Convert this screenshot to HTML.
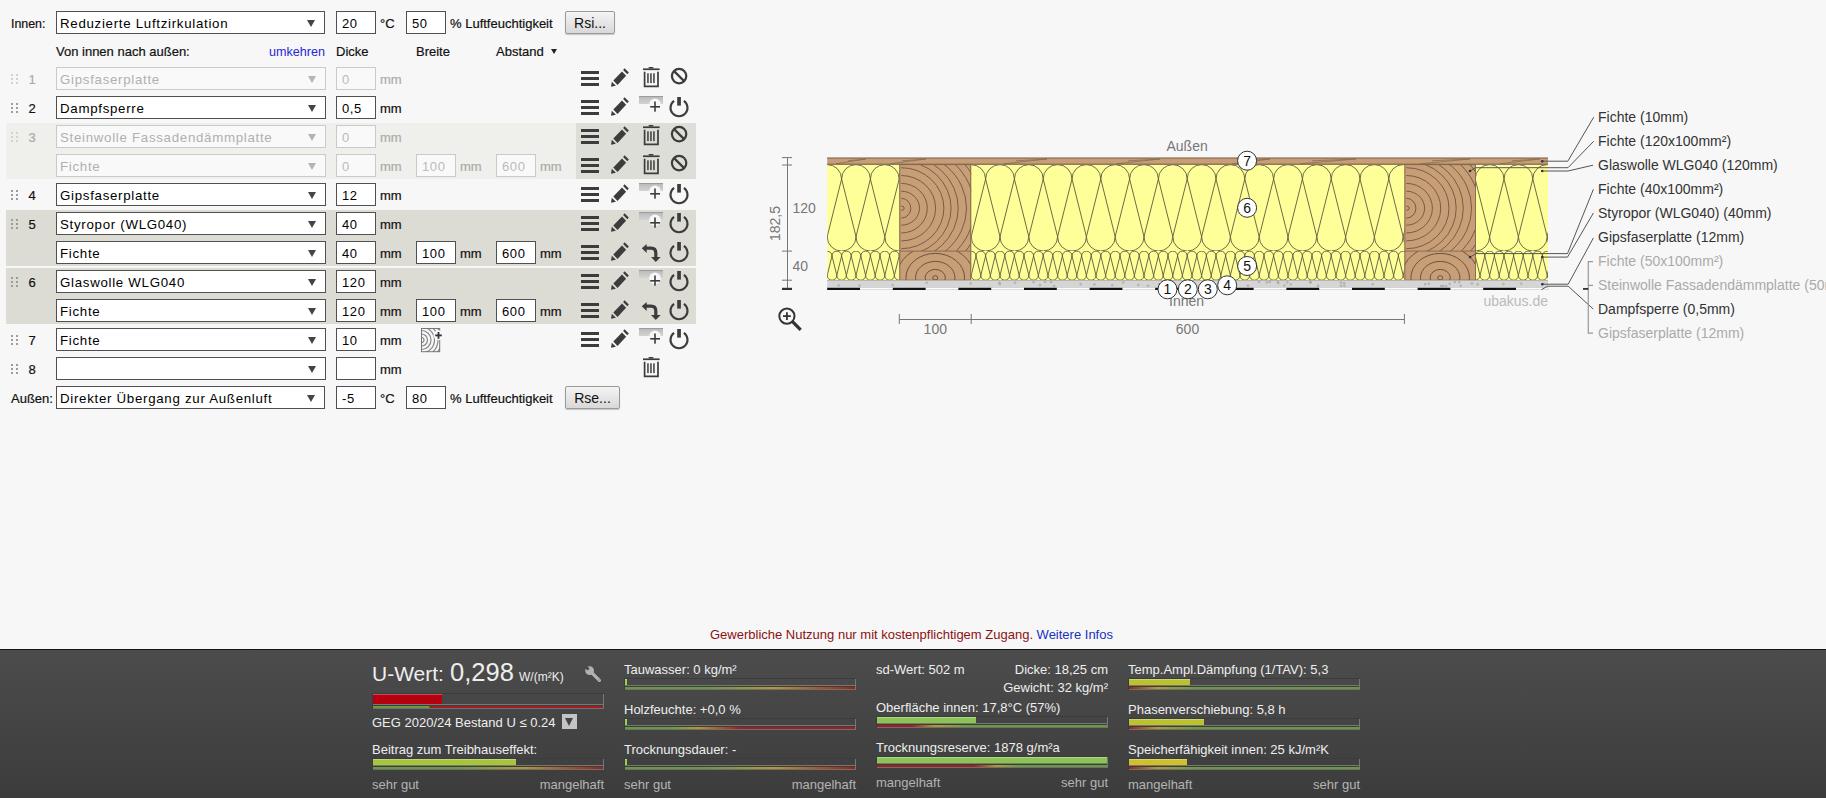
<!DOCTYPE html><html><head><meta charset="utf-8"><style>
html,body{margin:0;padding:0;}
body{width:1826px;height:798px;overflow:hidden;position:relative;background:#f7f7f7;font-family:"Liberation Sans",sans-serif;color:#111;}
.a{position:absolute;}
.t{position:absolute;font-size:13px;line-height:15px;white-space:nowrap;-webkit-text-stroke:0.2px currentColor;}
.sel{position:absolute;left:56px;width:268px;height:21px;border:1px solid #505050;background:#fff;color:#000;font-size:13.3px;letter-spacing:0.7px;line-height:23px;text-indent:3px;white-space:nowrap;overflow:hidden;}
.sel:after{content:"";position:absolute;right:9px;top:8px;border-left:4px solid transparent;border-right:4px solid transparent;border-top:7px solid #444;}
.sel.d{border-color:#cacaca;background:#f9f9f9;color:#b0b0b0;}
.sel.d:after{border-top-color:#b4b4b4;}
.inp{position:absolute;width:38px;height:21px;border:1px solid #505050;background:#fff;color:#000;font-size:13px;letter-spacing:0.6px;line-height:23px;text-indent:5px;white-space:nowrap;}
.inp.d{border-color:#cacaca;background:#f9f9f9;color:#bbb;}
.mm{position:absolute;font-size:13px;line-height:15px;color:#111;-webkit-text-stroke:0.2px currentColor;}
.mm.d{color:#aaa;}
.num{position:absolute;left:26px;width:12px;text-align:center;font-size:13px;line-height:15px;color:#111;-webkit-text-stroke:0.2px currentColor;}
.num.d{color:#aaa;}
.btn{position:absolute;height:21px;border:1px solid #9a9a9a;border-radius:2px;background:linear-gradient(#f4f4f4,#d8d8d8);font-size:14px;line-height:22px;text-align:center;box-shadow:0 1px 1px rgba(0,0,0,.2);color:#111;}
.ic{position:absolute;overflow:visible;}
</style></head><body>
<div class="a" style="left:6px;top:123px;width:570px;height:56px;background:#efefec"></div>
<div class="a" style="left:576px;top:123px;width:120px;height:56px;background:#deded8"></div>
<div class="a" style="left:6px;top:210px;width:690px;height:56px;background:#dcdcd5"></div>
<div class="a" style="left:6px;top:268px;width:690px;height:56px;background:#dcdcd5"></div>
<div class="t" style="left:11px;top:17px;font-size:12.4px;color:#111">Innen:</div>
<div class="sel" style="top:11px;width:267px">Reduzierte Luftzirkulation</div>
<div class="inp" style="left:336px;top:11px">20</div>
<div class="t" style="left:380px;top:16px">°C</div>
<div class="inp" style="left:406px;top:11px">50</div>
<div class="t" style="left:450px;top:16px">% Luftfeuchtigkeit</div>
<div class="btn" style="left:565px;top:11px;width:48px">Rsi...</div>
<div class="t" style="left:56px;top:44px">Von innen nach außen:</div>
<div class="t" style="left:269px;top:45px;color:#2626d6;font-size:12.6px;-webkit-text-stroke:0">umkehren</div>
<div class="t" style="left:336px;top:44px">Dicke</div>
<div class="t" style="left:416px;top:44px">Breite</div>
<div class="t" style="left:496px;top:44px">Abstand</div>
<div class="a" style="left:551px;top:49px;border-left:3px solid transparent;border-right:3px solid transparent;border-top:5px solid #222"></div>
<div class="a" style="left:11px;top:74px;width:8px;height:12px"><i style="position:absolute;left:0px;top:0px;width:2px;height:2px;background:#d2d2d2"></i><i style="position:absolute;left:5px;top:0px;width:2px;height:2px;background:#d2d2d2"></i><i style="position:absolute;left:0px;top:4px;width:2px;height:2px;background:#d2d2d2"></i><i style="position:absolute;left:5px;top:4px;width:2px;height:2px;background:#d2d2d2"></i><i style="position:absolute;left:0px;top:8px;width:2px;height:2px;background:#d2d2d2"></i><i style="position:absolute;left:5px;top:8px;width:2px;height:2px;background:#d2d2d2"></i></div>
<div class="num d" style="top:72px">1</div>
<div class="sel d" style="top:67px">Gipsfaserplatte</div>
<div class="inp d" style="left:336px;top:67px">0</div>
<div class="mm d" style="left:380px;top:72px">mm</div>
<svg class="ic" style="left:581px;top:71px" width="18" height="15"><rect x="0" y="0" width="18" height="3" fill="#3c3c3c"/><rect x="0" y="6" width="18" height="3" fill="#3c3c3c"/><rect x="0" y="12" width="18" height="3" fill="#3c3c3c"/></svg>
<svg class="ic" style="left:611px;top:68px" width="18" height="18.8" viewBox="0 0 18 18" preserveAspectRatio="none"><polygon points="0,18 0.8,13.2 4.9,17.1" fill="#3c3c3c"/><polygon points="2.3,12 11,3.4 15.1,7.5 6.5,16.2" fill="#3c3c3c"/><polygon points="12.1,1.9 13.6,0.3 17.8,4.3 16.3,5.9" fill="#3c3c3c"/></svg>
<svg class="ic" style="left:643px;top:67px" width="16" height="20"><rect x="0" y="1.4" width="16.6" height="1.7" fill="#3c3c3c"/><rect x="5.5" y="0" width="5" height="1.6" rx="0.8" fill="#3c3c3c"/><path d="M1.6,4.8 V19.4 H15 V4.8" fill="none" stroke="#3c3c3c" stroke-width="1.7"/><rect x="4.2" y="6.3" width="1.5" height="9.8" fill="#3c3c3c"/><rect x="7.2" y="6.3" width="1.5" height="9.8" fill="#3c3c3c"/><rect x="10.2" y="6.3" width="1.5" height="9.8" fill="#3c3c3c"/></svg>
<svg class="ic" style="left:670px;top:67px" width="18" height="20"><circle cx="9.1" cy="9.1" r="7.2" fill="none" stroke="#3c3c3c" stroke-width="2.2"/><line x1="4.1" y1="4.1" x2="14.1" y2="14.1" stroke="#3c3c3c" stroke-width="2.2"/></svg>
<div class="a" style="left:11px;top:103px;width:8px;height:12px"><i style="position:absolute;left:0px;top:0px;width:2px;height:2px;background:#9c9c9c"></i><i style="position:absolute;left:5px;top:0px;width:2px;height:2px;background:#9c9c9c"></i><i style="position:absolute;left:0px;top:4px;width:2px;height:2px;background:#9c9c9c"></i><i style="position:absolute;left:5px;top:4px;width:2px;height:2px;background:#9c9c9c"></i><i style="position:absolute;left:0px;top:8px;width:2px;height:2px;background:#9c9c9c"></i><i style="position:absolute;left:5px;top:8px;width:2px;height:2px;background:#9c9c9c"></i></div>
<div class="num" style="top:101px">2</div>
<div class="sel" style="top:96px">Dampfsperre</div>
<div class="inp" style="left:336px;top:96px">0,5</div>
<div class="mm" style="left:380px;top:101px">mm</div>
<svg class="ic" style="left:581px;top:100px" width="18" height="15"><rect x="0" y="0" width="18" height="3" fill="#3c3c3c"/><rect x="0" y="6" width="18" height="3" fill="#3c3c3c"/><rect x="0" y="12" width="18" height="3" fill="#3c3c3c"/></svg>
<svg class="ic" style="left:611px;top:97px" width="18" height="18.8" viewBox="0 0 18 18" preserveAspectRatio="none"><polygon points="0,18 0.8,13.2 4.9,17.1" fill="#3c3c3c"/><polygon points="2.3,12 11,3.4 15.1,7.5 6.5,16.2" fill="#3c3c3c"/><polygon points="12.1,1.9 13.6,0.3 17.8,4.3 16.3,5.9" fill="#3c3c3c"/></svg>
<svg class="ic" style="left:639px;top:96px" width="24" height="22"><defs><linearGradient id="g96" x1="0" y1="0" x2="0" y2="1"><stop offset="0" stop-color="#b8b8b8"/><stop offset="1" stop-color="#d4d4d4"/></linearGradient></defs><rect x="0" y="0" width="24" height="8" fill="url(#g96)"/><rect x="0" y="0" width="24" height="1" fill="#9c9c9c"/><circle cx="16" cy="8.3" r="5.8" fill="#f7f7f7"/><rect x="11.2" y="10" width="9.8" height="1.6" fill="#3c3c3c"/><rect x="15.2" y="5.5" width="1.6" height="10.2" fill="#3c3c3c"/></svg>
<svg class="ic" style="left:669px;top:96px" width="20" height="22"><path d="M5.1,4.8 A8.5,8.5 0 1 0 14.9,4.8" fill="none" stroke="#3c3c3c" stroke-width="2.1"/><rect x="8.2" y="1" width="3.7" height="8.6" fill="#3c3c3c"/></svg>
<div class="a" style="left:11px;top:132px;width:8px;height:12px"><i style="position:absolute;left:0px;top:0px;width:2px;height:2px;background:#d2d2d2"></i><i style="position:absolute;left:5px;top:0px;width:2px;height:2px;background:#d2d2d2"></i><i style="position:absolute;left:0px;top:4px;width:2px;height:2px;background:#d2d2d2"></i><i style="position:absolute;left:5px;top:4px;width:2px;height:2px;background:#d2d2d2"></i><i style="position:absolute;left:0px;top:8px;width:2px;height:2px;background:#d2d2d2"></i><i style="position:absolute;left:5px;top:8px;width:2px;height:2px;background:#d2d2d2"></i></div>
<div class="num d" style="top:130px">3</div>
<div class="sel d" style="top:125px">Steinwolle Fassadendämmplatte</div>
<div class="inp d" style="left:336px;top:125px">0</div>
<div class="mm d" style="left:380px;top:130px">mm</div>
<svg class="ic" style="left:581px;top:129px" width="18" height="15"><rect x="0" y="0" width="18" height="3" fill="#3c3c3c"/><rect x="0" y="6" width="18" height="3" fill="#3c3c3c"/><rect x="0" y="12" width="18" height="3" fill="#3c3c3c"/></svg>
<svg class="ic" style="left:611px;top:126px" width="18" height="18.8" viewBox="0 0 18 18" preserveAspectRatio="none"><polygon points="0,18 0.8,13.2 4.9,17.1" fill="#3c3c3c"/><polygon points="2.3,12 11,3.4 15.1,7.5 6.5,16.2" fill="#3c3c3c"/><polygon points="12.1,1.9 13.6,0.3 17.8,4.3 16.3,5.9" fill="#3c3c3c"/></svg>
<svg class="ic" style="left:643px;top:125px" width="16" height="20"><rect x="0" y="1.4" width="16.6" height="1.7" fill="#3c3c3c"/><rect x="5.5" y="0" width="5" height="1.6" rx="0.8" fill="#3c3c3c"/><path d="M1.6,4.8 V19.4 H15 V4.8" fill="none" stroke="#3c3c3c" stroke-width="1.7"/><rect x="4.2" y="6.3" width="1.5" height="9.8" fill="#3c3c3c"/><rect x="7.2" y="6.3" width="1.5" height="9.8" fill="#3c3c3c"/><rect x="10.2" y="6.3" width="1.5" height="9.8" fill="#3c3c3c"/></svg>
<svg class="ic" style="left:670px;top:125px" width="18" height="20"><circle cx="9.1" cy="9.1" r="7.2" fill="none" stroke="#3c3c3c" stroke-width="2.2"/><line x1="4.1" y1="4.1" x2="14.1" y2="14.1" stroke="#3c3c3c" stroke-width="2.2"/></svg>
<div class="sel d" style="top:154px">Fichte</div>
<div class="inp d" style="left:336px;top:154px">0</div>
<div class="mm d" style="left:380px;top:159px">mm</div>
<div class="inp d" style="left:416px;top:154px">100</div>
<div class="mm d" style="left:460px;top:159px">mm</div>
<div class="inp d" style="left:496px;top:154px">600</div>
<div class="mm d" style="left:540px;top:159px">mm</div>
<svg class="ic" style="left:581px;top:158px" width="18" height="15"><rect x="0" y="0" width="18" height="3" fill="#3c3c3c"/><rect x="0" y="6" width="18" height="3" fill="#3c3c3c"/><rect x="0" y="12" width="18" height="3" fill="#3c3c3c"/></svg>
<svg class="ic" style="left:611px;top:155px" width="18" height="18.8" viewBox="0 0 18 18" preserveAspectRatio="none"><polygon points="0,18 0.8,13.2 4.9,17.1" fill="#3c3c3c"/><polygon points="2.3,12 11,3.4 15.1,7.5 6.5,16.2" fill="#3c3c3c"/><polygon points="12.1,1.9 13.6,0.3 17.8,4.3 16.3,5.9" fill="#3c3c3c"/></svg>
<svg class="ic" style="left:643px;top:154px" width="16" height="20"><rect x="0" y="1.4" width="16.6" height="1.7" fill="#3c3c3c"/><rect x="5.5" y="0" width="5" height="1.6" rx="0.8" fill="#3c3c3c"/><path d="M1.6,4.8 V19.4 H15 V4.8" fill="none" stroke="#3c3c3c" stroke-width="1.7"/><rect x="4.2" y="6.3" width="1.5" height="9.8" fill="#3c3c3c"/><rect x="7.2" y="6.3" width="1.5" height="9.8" fill="#3c3c3c"/><rect x="10.2" y="6.3" width="1.5" height="9.8" fill="#3c3c3c"/></svg>
<svg class="ic" style="left:670px;top:154px" width="18" height="20"><circle cx="9.1" cy="9.1" r="7.2" fill="none" stroke="#3c3c3c" stroke-width="2.2"/><line x1="4.1" y1="4.1" x2="14.1" y2="14.1" stroke="#3c3c3c" stroke-width="2.2"/></svg>
<div class="a" style="left:11px;top:190px;width:8px;height:12px"><i style="position:absolute;left:0px;top:0px;width:2px;height:2px;background:#9c9c9c"></i><i style="position:absolute;left:5px;top:0px;width:2px;height:2px;background:#9c9c9c"></i><i style="position:absolute;left:0px;top:4px;width:2px;height:2px;background:#9c9c9c"></i><i style="position:absolute;left:5px;top:4px;width:2px;height:2px;background:#9c9c9c"></i><i style="position:absolute;left:0px;top:8px;width:2px;height:2px;background:#9c9c9c"></i><i style="position:absolute;left:5px;top:8px;width:2px;height:2px;background:#9c9c9c"></i></div>
<div class="num" style="top:188px">4</div>
<div class="sel" style="top:183px">Gipsfaserplatte</div>
<div class="inp" style="left:336px;top:183px">12</div>
<div class="mm" style="left:380px;top:188px">mm</div>
<svg class="ic" style="left:581px;top:187px" width="18" height="15"><rect x="0" y="0" width="18" height="3" fill="#3c3c3c"/><rect x="0" y="6" width="18" height="3" fill="#3c3c3c"/><rect x="0" y="12" width="18" height="3" fill="#3c3c3c"/></svg>
<svg class="ic" style="left:611px;top:184px" width="18" height="18.8" viewBox="0 0 18 18" preserveAspectRatio="none"><polygon points="0,18 0.8,13.2 4.9,17.1" fill="#3c3c3c"/><polygon points="2.3,12 11,3.4 15.1,7.5 6.5,16.2" fill="#3c3c3c"/><polygon points="12.1,1.9 13.6,0.3 17.8,4.3 16.3,5.9" fill="#3c3c3c"/></svg>
<svg class="ic" style="left:639px;top:183px" width="24" height="22"><defs><linearGradient id="g183" x1="0" y1="0" x2="0" y2="1"><stop offset="0" stop-color="#b8b8b8"/><stop offset="1" stop-color="#d4d4d4"/></linearGradient></defs><rect x="0" y="0" width="24" height="8" fill="url(#g183)"/><rect x="0" y="0" width="24" height="1" fill="#9c9c9c"/><circle cx="16" cy="8.3" r="5.8" fill="#f7f7f7"/><rect x="11.2" y="10" width="9.8" height="1.6" fill="#3c3c3c"/><rect x="15.2" y="5.5" width="1.6" height="10.2" fill="#3c3c3c"/></svg>
<svg class="ic" style="left:669px;top:183px" width="20" height="22"><path d="M5.1,4.8 A8.5,8.5 0 1 0 14.9,4.8" fill="none" stroke="#3c3c3c" stroke-width="2.1"/><rect x="8.2" y="1" width="3.7" height="8.6" fill="#3c3c3c"/></svg>
<div class="a" style="left:11px;top:219px;width:8px;height:12px"><i style="position:absolute;left:0px;top:0px;width:2px;height:2px;background:#9c9c9c"></i><i style="position:absolute;left:5px;top:0px;width:2px;height:2px;background:#9c9c9c"></i><i style="position:absolute;left:0px;top:4px;width:2px;height:2px;background:#9c9c9c"></i><i style="position:absolute;left:5px;top:4px;width:2px;height:2px;background:#9c9c9c"></i><i style="position:absolute;left:0px;top:8px;width:2px;height:2px;background:#9c9c9c"></i><i style="position:absolute;left:5px;top:8px;width:2px;height:2px;background:#9c9c9c"></i></div>
<div class="num" style="top:217px">5</div>
<div class="sel" style="top:212px">Styropor (WLG040)</div>
<div class="inp" style="left:336px;top:212px">40</div>
<div class="mm" style="left:380px;top:217px">mm</div>
<svg class="ic" style="left:581px;top:216px" width="18" height="15"><rect x="0" y="0" width="18" height="3" fill="#3c3c3c"/><rect x="0" y="6" width="18" height="3" fill="#3c3c3c"/><rect x="0" y="12" width="18" height="3" fill="#3c3c3c"/></svg>
<svg class="ic" style="left:611px;top:213px" width="18" height="18.8" viewBox="0 0 18 18" preserveAspectRatio="none"><polygon points="0,18 0.8,13.2 4.9,17.1" fill="#3c3c3c"/><polygon points="2.3,12 11,3.4 15.1,7.5 6.5,16.2" fill="#3c3c3c"/><polygon points="12.1,1.9 13.6,0.3 17.8,4.3 16.3,5.9" fill="#3c3c3c"/></svg>
<svg class="ic" style="left:639px;top:212px" width="24" height="22"><defs><linearGradient id="g212" x1="0" y1="0" x2="0" y2="1"><stop offset="0" stop-color="#b8b8b8"/><stop offset="1" stop-color="#d4d4d4"/></linearGradient></defs><rect x="0" y="0" width="24" height="8" fill="url(#g212)"/><rect x="0" y="0" width="24" height="1" fill="#9c9c9c"/><circle cx="16" cy="8.3" r="5.8" fill="#f7f7f7"/><rect x="11.2" y="10" width="9.8" height="1.6" fill="#3c3c3c"/><rect x="15.2" y="5.5" width="1.6" height="10.2" fill="#3c3c3c"/></svg>
<svg class="ic" style="left:669px;top:212px" width="20" height="22"><path d="M5.1,4.8 A8.5,8.5 0 1 0 14.9,4.8" fill="none" stroke="#3c3c3c" stroke-width="2.1"/><rect x="8.2" y="1" width="3.7" height="8.6" fill="#3c3c3c"/></svg>
<div class="sel" style="top:241px">Fichte</div>
<div class="inp" style="left:336px;top:241px">40</div>
<div class="mm" style="left:380px;top:246px">mm</div>
<div class="inp" style="left:416px;top:241px">100</div>
<div class="mm" style="left:460px;top:246px">mm</div>
<div class="inp" style="left:496px;top:241px">600</div>
<div class="mm" style="left:540px;top:246px">mm</div>
<svg class="ic" style="left:581px;top:245px" width="18" height="15"><rect x="0" y="0" width="18" height="3" fill="#3c3c3c"/><rect x="0" y="6" width="18" height="3" fill="#3c3c3c"/><rect x="0" y="12" width="18" height="3" fill="#3c3c3c"/></svg>
<svg class="ic" style="left:611px;top:242px" width="18" height="18.8" viewBox="0 0 18 18" preserveAspectRatio="none"><polygon points="0,18 0.8,13.2 4.9,17.1" fill="#3c3c3c"/><polygon points="2.3,12 11,3.4 15.1,7.5 6.5,16.2" fill="#3c3c3c"/><polygon points="12.1,1.9 13.6,0.3 17.8,4.3 16.3,5.9" fill="#3c3c3c"/></svg>
<svg class="ic" style="left:641px;top:241px" width="20" height="22"><polygon points="0.8,7.3 5.7,2.9 5.7,11.9" fill="#3c3c3c"/><path d="M5,7.2 H10 Q14.8,7.2 14.8,12 V16" fill="none" stroke="#3c3c3c" stroke-width="3.2"/><polygon points="10,16 19.7,16 14.8,20.9" fill="#3c3c3c"/></svg>
<svg class="ic" style="left:669px;top:241px" width="20" height="22"><path d="M5.1,4.8 A8.5,8.5 0 1 0 14.9,4.8" fill="none" stroke="#3c3c3c" stroke-width="2.1"/><rect x="8.2" y="1" width="3.7" height="8.6" fill="#3c3c3c"/></svg>
<div class="a" style="left:11px;top:277px;width:8px;height:12px"><i style="position:absolute;left:0px;top:0px;width:2px;height:2px;background:#9c9c9c"></i><i style="position:absolute;left:5px;top:0px;width:2px;height:2px;background:#9c9c9c"></i><i style="position:absolute;left:0px;top:4px;width:2px;height:2px;background:#9c9c9c"></i><i style="position:absolute;left:5px;top:4px;width:2px;height:2px;background:#9c9c9c"></i><i style="position:absolute;left:0px;top:8px;width:2px;height:2px;background:#9c9c9c"></i><i style="position:absolute;left:5px;top:8px;width:2px;height:2px;background:#9c9c9c"></i></div>
<div class="num" style="top:275px">6</div>
<div class="sel" style="top:270px">Glaswolle WLG040</div>
<div class="inp" style="left:336px;top:270px">120</div>
<div class="mm" style="left:380px;top:275px">mm</div>
<svg class="ic" style="left:581px;top:274px" width="18" height="15"><rect x="0" y="0" width="18" height="3" fill="#3c3c3c"/><rect x="0" y="6" width="18" height="3" fill="#3c3c3c"/><rect x="0" y="12" width="18" height="3" fill="#3c3c3c"/></svg>
<svg class="ic" style="left:611px;top:271px" width="18" height="18.8" viewBox="0 0 18 18" preserveAspectRatio="none"><polygon points="0,18 0.8,13.2 4.9,17.1" fill="#3c3c3c"/><polygon points="2.3,12 11,3.4 15.1,7.5 6.5,16.2" fill="#3c3c3c"/><polygon points="12.1,1.9 13.6,0.3 17.8,4.3 16.3,5.9" fill="#3c3c3c"/></svg>
<svg class="ic" style="left:639px;top:270px" width="24" height="22"><defs><linearGradient id="g270" x1="0" y1="0" x2="0" y2="1"><stop offset="0" stop-color="#b8b8b8"/><stop offset="1" stop-color="#d4d4d4"/></linearGradient></defs><rect x="0" y="0" width="24" height="8" fill="url(#g270)"/><rect x="0" y="0" width="24" height="1" fill="#9c9c9c"/><circle cx="16" cy="8.3" r="5.8" fill="#f7f7f7"/><rect x="11.2" y="10" width="9.8" height="1.6" fill="#3c3c3c"/><rect x="15.2" y="5.5" width="1.6" height="10.2" fill="#3c3c3c"/></svg>
<svg class="ic" style="left:669px;top:270px" width="20" height="22"><path d="M5.1,4.8 A8.5,8.5 0 1 0 14.9,4.8" fill="none" stroke="#3c3c3c" stroke-width="2.1"/><rect x="8.2" y="1" width="3.7" height="8.6" fill="#3c3c3c"/></svg>
<div class="sel" style="top:299px">Fichte</div>
<div class="inp" style="left:336px;top:299px">120</div>
<div class="mm" style="left:380px;top:304px">mm</div>
<div class="inp" style="left:416px;top:299px">100</div>
<div class="mm" style="left:460px;top:304px">mm</div>
<div class="inp" style="left:496px;top:299px">600</div>
<div class="mm" style="left:540px;top:304px">mm</div>
<svg class="ic" style="left:581px;top:303px" width="18" height="15"><rect x="0" y="0" width="18" height="3" fill="#3c3c3c"/><rect x="0" y="6" width="18" height="3" fill="#3c3c3c"/><rect x="0" y="12" width="18" height="3" fill="#3c3c3c"/></svg>
<svg class="ic" style="left:611px;top:300px" width="18" height="18.8" viewBox="0 0 18 18" preserveAspectRatio="none"><polygon points="0,18 0.8,13.2 4.9,17.1" fill="#3c3c3c"/><polygon points="2.3,12 11,3.4 15.1,7.5 6.5,16.2" fill="#3c3c3c"/><polygon points="12.1,1.9 13.6,0.3 17.8,4.3 16.3,5.9" fill="#3c3c3c"/></svg>
<svg class="ic" style="left:641px;top:299px" width="20" height="22"><polygon points="0.8,7.3 5.7,2.9 5.7,11.9" fill="#3c3c3c"/><path d="M5,7.2 H10 Q14.8,7.2 14.8,12 V16" fill="none" stroke="#3c3c3c" stroke-width="3.2"/><polygon points="10,16 19.7,16 14.8,20.9" fill="#3c3c3c"/></svg>
<svg class="ic" style="left:669px;top:299px" width="20" height="22"><path d="M5.1,4.8 A8.5,8.5 0 1 0 14.9,4.8" fill="none" stroke="#3c3c3c" stroke-width="2.1"/><rect x="8.2" y="1" width="3.7" height="8.6" fill="#3c3c3c"/></svg>
<div class="a" style="left:11px;top:335px;width:8px;height:12px"><i style="position:absolute;left:0px;top:0px;width:2px;height:2px;background:#9c9c9c"></i><i style="position:absolute;left:5px;top:0px;width:2px;height:2px;background:#9c9c9c"></i><i style="position:absolute;left:0px;top:4px;width:2px;height:2px;background:#9c9c9c"></i><i style="position:absolute;left:5px;top:4px;width:2px;height:2px;background:#9c9c9c"></i><i style="position:absolute;left:0px;top:8px;width:2px;height:2px;background:#9c9c9c"></i><i style="position:absolute;left:5px;top:8px;width:2px;height:2px;background:#9c9c9c"></i></div>
<div class="num" style="top:333px">7</div>
<div class="sel" style="top:328px">Fichte</div>
<div class="inp" style="left:336px;top:328px">10</div>
<div class="mm" style="left:380px;top:333px">mm</div>
<svg class="ic" style="left:581px;top:332px" width="18" height="15"><rect x="0" y="0" width="18" height="3" fill="#3c3c3c"/><rect x="0" y="6" width="18" height="3" fill="#3c3c3c"/><rect x="0" y="12" width="18" height="3" fill="#3c3c3c"/></svg>
<svg class="ic" style="left:611px;top:329px" width="18" height="18.8" viewBox="0 0 18 18" preserveAspectRatio="none"><polygon points="0,18 0.8,13.2 4.9,17.1" fill="#3c3c3c"/><polygon points="2.3,12 11,3.4 15.1,7.5 6.5,16.2" fill="#3c3c3c"/><polygon points="12.1,1.9 13.6,0.3 17.8,4.3 16.3,5.9" fill="#3c3c3c"/></svg>
<svg class="ic" style="left:639px;top:328px" width="24" height="22"><defs><linearGradient id="g328" x1="0" y1="0" x2="0" y2="1"><stop offset="0" stop-color="#b8b8b8"/><stop offset="1" stop-color="#d4d4d4"/></linearGradient></defs><rect x="0" y="0" width="24" height="8" fill="url(#g328)"/><rect x="0" y="0" width="24" height="1" fill="#9c9c9c"/><circle cx="16" cy="8.3" r="5.8" fill="#f7f7f7"/><rect x="11.2" y="10" width="9.8" height="1.6" fill="#3c3c3c"/><rect x="15.2" y="5.5" width="1.6" height="10.2" fill="#3c3c3c"/></svg>
<svg class="ic" style="left:669px;top:328px" width="20" height="22"><path d="M5.1,4.8 A8.5,8.5 0 1 0 14.9,4.8" fill="none" stroke="#3c3c3c" stroke-width="2.1"/><rect x="8.2" y="1" width="3.7" height="8.6" fill="#3c3c3c"/></svg>
<div class="a" style="left:11px;top:364px;width:8px;height:12px"><i style="position:absolute;left:0px;top:0px;width:2px;height:2px;background:#9c9c9c"></i><i style="position:absolute;left:5px;top:0px;width:2px;height:2px;background:#9c9c9c"></i><i style="position:absolute;left:0px;top:4px;width:2px;height:2px;background:#9c9c9c"></i><i style="position:absolute;left:5px;top:4px;width:2px;height:2px;background:#9c9c9c"></i><i style="position:absolute;left:0px;top:8px;width:2px;height:2px;background:#9c9c9c"></i><i style="position:absolute;left:5px;top:8px;width:2px;height:2px;background:#9c9c9c"></i></div>
<div class="num" style="top:362px">8</div>
<div class="sel" style="top:357px"></div>
<div class="inp" style="left:336px;top:357px"></div>
<div class="mm" style="left:380px;top:362px">mm</div>
<svg class="ic" style="left:643px;top:357px" width="16" height="20"><rect x="0" y="1.4" width="16.6" height="1.7" fill="#3c3c3c"/><rect x="5.5" y="0" width="5" height="1.6" rx="0.8" fill="#3c3c3c"/><path d="M1.6,4.8 V19.4 H15 V4.8" fill="none" stroke="#3c3c3c" stroke-width="1.7"/><rect x="4.2" y="6.3" width="1.5" height="9.8" fill="#3c3c3c"/><rect x="7.2" y="6.3" width="1.5" height="9.8" fill="#3c3c3c"/><rect x="10.2" y="6.3" width="1.5" height="9.8" fill="#3c3c3c"/></svg>
<svg class="ic" style="left:421px;top:328px" width="22" height="25">
<defs><clipPath id="wc"><rect x="0" y="0" width="19" height="24"/></clipPath></defs>
<g clip-path="url(#wc)" fill="none" stroke="#8a8a8a" stroke-width="1.2">
<circle cx="0.5" cy="12" r="2.5"/><circle cx="0.5" cy="12" r="6"/><circle cx="0.5" cy="12" r="9.5"/><circle cx="0.5" cy="12" r="13"/><circle cx="0.5" cy="12" r="16.5"/><circle cx="0.5" cy="12" r="20"/>
</g>
<rect x="0.5" y="0.5" width="18.2" height="23.2" fill="none" stroke="#777" stroke-width="1"/>
<circle cx="17.5" cy="7.3" r="5" fill="#f7f7f7"/>
<rect x="14.2" y="6.5" width="6.6" height="1.8" fill="#333"/><rect x="16.6" y="4" width="1.8" height="6.8" fill="#333"/>
</svg>
<div class="t" style="left:11px;top:391px;font-size:13px">Außen:</div>
<div class="sel" style="top:386px;width:267px">Direkter Übergang zur Außenluft</div>
<div class="inp" style="left:336px;top:386px">-5</div>
<div class="t" style="left:380px;top:391px">°C</div>
<div class="inp" style="left:406px;top:386px">80</div>
<div class="t" style="left:450px;top:391px">% Luftfeuchtigkeit</div>
<div class="btn" style="left:565px;top:386px;width:53px">Rse...</div>
<svg class="a" style="left:0;top:0" width="1826" height="360" viewBox="0 0 1826 360">
<defs>
<clipPath id="c6"><rect x="827.2" y="164.6" width="720.8" height="86.5"/></clipPath>
<clipPath id="c5"><rect x="827.2" y="251.1" width="720.8" height="29.099999999999994"/></clipPath>
<clipPath id="cs1"><rect x="901.1999999999999" y="164.6" width="70.00000000000009" height="86.5"/></clipPath>
<clipPath id="cs1b"><rect x="899.3" y="251.1" width="71.90000000000009" height="29.099999999999994"/></clipPath>
<clipPath id="cs2"><rect x="1406.3000000000002" y="164.6" width="69.6999999999999" height="86.5"/></clipPath>
<clipPath id="cs2b"><rect x="1404.4" y="251.1" width="71.59999999999991" height="29.099999999999994"/></clipPath>
<clipPath id="ctop"><rect x="827.2" y="157.6" width="720.8" height="7.0"/></clipPath>
</defs>
<rect x="827.2" y="164.6" width="720.8" height="115.6" fill="#ffff99"/>
<g clip-path="url(#c6)"><path d="M784.00,179.00A14.40,14.40 0 0 1 812.80,179.00L798.40,236.70ZM798.40,236.70A14.40,14.40 0 0 0 827.20,236.70M812.80,179.00A14.40,14.40 0 0 1 841.60,179.00L827.20,236.70ZM827.20,236.70A14.40,14.40 0 0 0 856.00,236.70M841.60,179.00A14.40,14.40 0 0 1 870.40,179.00L856.00,236.70ZM856.00,236.70A14.40,14.40 0 0 0 884.80,236.70M870.40,179.00A14.40,14.40 0 0 1 899.20,179.00L884.80,236.70ZM884.80,236.70A14.40,14.40 0 0 0 913.60,236.70M899.20,179.00A14.40,14.40 0 0 1 928.00,179.00L913.60,236.70ZM913.60,236.70A14.40,14.40 0 0 0 942.40,236.70M928.00,179.00A14.40,14.40 0 0 1 956.80,179.00L942.40,236.70ZM942.40,236.70A14.40,14.40 0 0 0 971.20,236.70M956.80,179.00A14.40,14.40 0 0 1 985.60,179.00L971.20,236.70ZM971.20,236.70A14.40,14.40 0 0 0 1000.00,236.70M985.60,179.00A14.40,14.40 0 0 1 1014.40,179.00L1000.00,236.70ZM1000.00,236.70A14.40,14.40 0 0 0 1028.80,236.70M1014.40,179.00A14.40,14.40 0 0 1 1043.20,179.00L1028.80,236.70ZM1028.80,236.70A14.40,14.40 0 0 0 1057.60,236.70M1043.20,179.00A14.40,14.40 0 0 1 1072.00,179.00L1057.60,236.70ZM1057.60,236.70A14.40,14.40 0 0 0 1086.40,236.70M1072.00,179.00A14.40,14.40 0 0 1 1100.80,179.00L1086.40,236.70ZM1086.40,236.70A14.40,14.40 0 0 0 1115.20,236.70M1100.80,179.00A14.40,14.40 0 0 1 1129.60,179.00L1115.20,236.70ZM1115.20,236.70A14.40,14.40 0 0 0 1144.00,236.70M1129.60,179.00A14.40,14.40 0 0 1 1158.40,179.00L1144.00,236.70ZM1144.00,236.70A14.40,14.40 0 0 0 1172.80,236.70M1158.40,179.00A14.40,14.40 0 0 1 1187.20,179.00L1172.80,236.70ZM1172.80,236.70A14.40,14.40 0 0 0 1201.60,236.70M1187.20,179.00A14.40,14.40 0 0 1 1216.00,179.00L1201.60,236.70ZM1201.60,236.70A14.40,14.40 0 0 0 1230.40,236.70M1216.00,179.00A14.40,14.40 0 0 1 1244.80,179.00L1230.40,236.70ZM1230.40,236.70A14.40,14.40 0 0 0 1259.20,236.70M1244.80,179.00A14.40,14.40 0 0 1 1273.60,179.00L1259.20,236.70ZM1259.20,236.70A14.40,14.40 0 0 0 1288.00,236.70M1273.60,179.00A14.40,14.40 0 0 1 1302.40,179.00L1288.00,236.70ZM1288.00,236.70A14.40,14.40 0 0 0 1316.80,236.70M1302.40,179.00A14.40,14.40 0 0 1 1331.20,179.00L1316.80,236.70ZM1316.80,236.70A14.40,14.40 0 0 0 1345.60,236.70M1331.20,179.00A14.40,14.40 0 0 1 1360.00,179.00L1345.60,236.70ZM1345.60,236.70A14.40,14.40 0 0 0 1374.40,236.70M1360.00,179.00A14.40,14.40 0 0 1 1388.80,179.00L1374.40,236.70ZM1374.40,236.70A14.40,14.40 0 0 0 1403.20,236.70M1388.80,179.00A14.40,14.40 0 0 1 1417.60,179.00L1403.20,236.70ZM1403.20,236.70A14.40,14.40 0 0 0 1432.00,236.70M1417.60,179.00A14.40,14.40 0 0 1 1446.40,179.00L1432.00,236.70ZM1432.00,236.70A14.40,14.40 0 0 0 1460.80,236.70M1446.40,179.00A14.40,14.40 0 0 1 1475.20,179.00L1460.80,236.70ZM1460.80,236.70A14.40,14.40 0 0 0 1489.60,236.70M1475.20,179.00A14.40,14.40 0 0 1 1504.00,179.00L1489.60,236.70ZM1489.60,236.70A14.40,14.40 0 0 0 1518.40,236.70M1504.00,179.00A14.40,14.40 0 0 1 1532.80,179.00L1518.40,236.70ZM1518.40,236.70A14.40,14.40 0 0 0 1547.20,236.70M1532.80,179.00A14.40,14.40 0 0 1 1561.60,179.00L1547.20,236.70ZM1547.20,236.70A14.40,14.40 0 0 0 1576.00,236.70M1561.60,179.00A14.40,14.40 0 0 1 1590.40,179.00L1576.00,236.70ZM1576.00,236.70A14.40,14.40 0 0 0 1604.80,236.70" fill="none" stroke="#5b5a3e" stroke-width="0.9"/></g>
<g clip-path="url(#c5)"><path d="M812.80,255.90A4.80,4.80 0 0 1 822.40,255.90L817.60,275.40ZM817.60,275.40A4.80,4.80 0 0 0 827.20,275.40M822.40,255.90A4.80,4.80 0 0 1 832.00,255.90L827.20,275.40ZM827.20,275.40A4.80,4.80 0 0 0 836.80,275.40M832.00,255.90A4.80,4.80 0 0 1 841.60,255.90L836.80,275.40ZM836.80,275.40A4.80,4.80 0 0 0 846.40,275.40M841.60,255.90A4.80,4.80 0 0 1 851.20,255.90L846.40,275.40ZM846.40,275.40A4.80,4.80 0 0 0 856.00,275.40M851.20,255.90A4.80,4.80 0 0 1 860.80,255.90L856.00,275.40ZM856.00,275.40A4.80,4.80 0 0 0 865.60,275.40M860.80,255.90A4.80,4.80 0 0 1 870.40,255.90L865.60,275.40ZM865.60,275.40A4.80,4.80 0 0 0 875.20,275.40M870.40,255.90A4.80,4.80 0 0 1 880.00,255.90L875.20,275.40ZM875.20,275.40A4.80,4.80 0 0 0 884.80,275.40M880.00,255.90A4.80,4.80 0 0 1 889.60,255.90L884.80,275.40ZM884.80,275.40A4.80,4.80 0 0 0 894.40,275.40M889.60,255.90A4.80,4.80 0 0 1 899.20,255.90L894.40,275.40ZM894.40,275.40A4.80,4.80 0 0 0 904.00,275.40M899.20,255.90A4.80,4.80 0 0 1 908.80,255.90L904.00,275.40ZM904.00,275.40A4.80,4.80 0 0 0 913.60,275.40M908.80,255.90A4.80,4.80 0 0 1 918.40,255.90L913.60,275.40ZM913.60,275.40A4.80,4.80 0 0 0 923.20,275.40M918.40,255.90A4.80,4.80 0 0 1 928.00,255.90L923.20,275.40ZM923.20,275.40A4.80,4.80 0 0 0 932.80,275.40M928.00,255.90A4.80,4.80 0 0 1 937.60,255.90L932.80,275.40ZM932.80,275.40A4.80,4.80 0 0 0 942.40,275.40M937.60,255.90A4.80,4.80 0 0 1 947.20,255.90L942.40,275.40ZM942.40,275.40A4.80,4.80 0 0 0 952.00,275.40M947.20,255.90A4.80,4.80 0 0 1 956.80,255.90L952.00,275.40ZM952.00,275.40A4.80,4.80 0 0 0 961.60,275.40M956.80,255.90A4.80,4.80 0 0 1 966.40,255.90L961.60,275.40ZM961.60,275.40A4.80,4.80 0 0 0 971.20,275.40M966.40,255.90A4.80,4.80 0 0 1 976.00,255.90L971.20,275.40ZM971.20,275.40A4.80,4.80 0 0 0 980.80,275.40M976.00,255.90A4.80,4.80 0 0 1 985.60,255.90L980.80,275.40ZM980.80,275.40A4.80,4.80 0 0 0 990.40,275.40M985.60,255.90A4.80,4.80 0 0 1 995.20,255.90L990.40,275.40ZM990.40,275.40A4.80,4.80 0 0 0 1000.00,275.40M995.20,255.90A4.80,4.80 0 0 1 1004.80,255.90L1000.00,275.40ZM1000.00,275.40A4.80,4.80 0 0 0 1009.60,275.40M1004.80,255.90A4.80,4.80 0 0 1 1014.40,255.90L1009.60,275.40ZM1009.60,275.40A4.80,4.80 0 0 0 1019.20,275.40M1014.40,255.90A4.80,4.80 0 0 1 1024.00,255.90L1019.20,275.40ZM1019.20,275.40A4.80,4.80 0 0 0 1028.80,275.40M1024.00,255.90A4.80,4.80 0 0 1 1033.60,255.90L1028.80,275.40ZM1028.80,275.40A4.80,4.80 0 0 0 1038.40,275.40M1033.60,255.90A4.80,4.80 0 0 1 1043.20,255.90L1038.40,275.40ZM1038.40,275.40A4.80,4.80 0 0 0 1048.00,275.40M1043.20,255.90A4.80,4.80 0 0 1 1052.80,255.90L1048.00,275.40ZM1048.00,275.40A4.80,4.80 0 0 0 1057.60,275.40M1052.80,255.90A4.80,4.80 0 0 1 1062.40,255.90L1057.60,275.40ZM1057.60,275.40A4.80,4.80 0 0 0 1067.20,275.40M1062.40,255.90A4.80,4.80 0 0 1 1072.00,255.90L1067.20,275.40ZM1067.20,275.40A4.80,4.80 0 0 0 1076.80,275.40M1072.00,255.90A4.80,4.80 0 0 1 1081.60,255.90L1076.80,275.40ZM1076.80,275.40A4.80,4.80 0 0 0 1086.40,275.40M1081.60,255.90A4.80,4.80 0 0 1 1091.20,255.90L1086.40,275.40ZM1086.40,275.40A4.80,4.80 0 0 0 1096.00,275.40M1091.20,255.90A4.80,4.80 0 0 1 1100.80,255.90L1096.00,275.40ZM1096.00,275.40A4.80,4.80 0 0 0 1105.60,275.40M1100.80,255.90A4.80,4.80 0 0 1 1110.40,255.90L1105.60,275.40ZM1105.60,275.40A4.80,4.80 0 0 0 1115.20,275.40M1110.40,255.90A4.80,4.80 0 0 1 1120.00,255.90L1115.20,275.40ZM1115.20,275.40A4.80,4.80 0 0 0 1124.80,275.40M1120.00,255.90A4.80,4.80 0 0 1 1129.60,255.90L1124.80,275.40ZM1124.80,275.40A4.80,4.80 0 0 0 1134.40,275.40M1129.60,255.90A4.80,4.80 0 0 1 1139.20,255.90L1134.40,275.40ZM1134.40,275.40A4.80,4.80 0 0 0 1144.00,275.40M1139.20,255.90A4.80,4.80 0 0 1 1148.80,255.90L1144.00,275.40ZM1144.00,275.40A4.80,4.80 0 0 0 1153.60,275.40M1148.80,255.90A4.80,4.80 0 0 1 1158.40,255.90L1153.60,275.40ZM1153.60,275.40A4.80,4.80 0 0 0 1163.20,275.40M1158.40,255.90A4.80,4.80 0 0 1 1168.00,255.90L1163.20,275.40ZM1163.20,275.40A4.80,4.80 0 0 0 1172.80,275.40M1168.00,255.90A4.80,4.80 0 0 1 1177.60,255.90L1172.80,275.40ZM1172.80,275.40A4.80,4.80 0 0 0 1182.40,275.40M1177.60,255.90A4.80,4.80 0 0 1 1187.20,255.90L1182.40,275.40ZM1182.40,275.40A4.80,4.80 0 0 0 1192.00,275.40M1187.20,255.90A4.80,4.80 0 0 1 1196.80,255.90L1192.00,275.40ZM1192.00,275.40A4.80,4.80 0 0 0 1201.60,275.40M1196.80,255.90A4.80,4.80 0 0 1 1206.40,255.90L1201.60,275.40ZM1201.60,275.40A4.80,4.80 0 0 0 1211.20,275.40M1206.40,255.90A4.80,4.80 0 0 1 1216.00,255.90L1211.20,275.40ZM1211.20,275.40A4.80,4.80 0 0 0 1220.80,275.40M1216.00,255.90A4.80,4.80 0 0 1 1225.60,255.90L1220.80,275.40ZM1220.80,275.40A4.80,4.80 0 0 0 1230.40,275.40M1225.60,255.90A4.80,4.80 0 0 1 1235.20,255.90L1230.40,275.40ZM1230.40,275.40A4.80,4.80 0 0 0 1240.00,275.40M1235.20,255.90A4.80,4.80 0 0 1 1244.80,255.90L1240.00,275.40ZM1240.00,275.40A4.80,4.80 0 0 0 1249.60,275.40M1244.80,255.90A4.80,4.80 0 0 1 1254.40,255.90L1249.60,275.40ZM1249.60,275.40A4.80,4.80 0 0 0 1259.20,275.40M1254.40,255.90A4.80,4.80 0 0 1 1264.00,255.90L1259.20,275.40ZM1259.20,275.40A4.80,4.80 0 0 0 1268.80,275.40M1264.00,255.90A4.80,4.80 0 0 1 1273.60,255.90L1268.80,275.40ZM1268.80,275.40A4.80,4.80 0 0 0 1278.40,275.40M1273.60,255.90A4.80,4.80 0 0 1 1283.20,255.90L1278.40,275.40ZM1278.40,275.40A4.80,4.80 0 0 0 1288.00,275.40M1283.20,255.90A4.80,4.80 0 0 1 1292.80,255.90L1288.00,275.40ZM1288.00,275.40A4.80,4.80 0 0 0 1297.60,275.40M1292.80,255.90A4.80,4.80 0 0 1 1302.40,255.90L1297.60,275.40ZM1297.60,275.40A4.80,4.80 0 0 0 1307.20,275.40M1302.40,255.90A4.80,4.80 0 0 1 1312.00,255.90L1307.20,275.40ZM1307.20,275.40A4.80,4.80 0 0 0 1316.80,275.40M1312.00,255.90A4.80,4.80 0 0 1 1321.60,255.90L1316.80,275.40ZM1316.80,275.40A4.80,4.80 0 0 0 1326.40,275.40M1321.60,255.90A4.80,4.80 0 0 1 1331.20,255.90L1326.40,275.40ZM1326.40,275.40A4.80,4.80 0 0 0 1336.00,275.40M1331.20,255.90A4.80,4.80 0 0 1 1340.80,255.90L1336.00,275.40ZM1336.00,275.40A4.80,4.80 0 0 0 1345.60,275.40M1340.80,255.90A4.80,4.80 0 0 1 1350.40,255.90L1345.60,275.40ZM1345.60,275.40A4.80,4.80 0 0 0 1355.20,275.40M1350.40,255.90A4.80,4.80 0 0 1 1360.00,255.90L1355.20,275.40ZM1355.20,275.40A4.80,4.80 0 0 0 1364.80,275.40M1360.00,255.90A4.80,4.80 0 0 1 1369.60,255.90L1364.80,275.40ZM1364.80,275.40A4.80,4.80 0 0 0 1374.40,275.40M1369.60,255.90A4.80,4.80 0 0 1 1379.20,255.90L1374.40,275.40ZM1374.40,275.40A4.80,4.80 0 0 0 1384.00,275.40M1379.20,255.90A4.80,4.80 0 0 1 1388.80,255.90L1384.00,275.40ZM1384.00,275.40A4.80,4.80 0 0 0 1393.60,275.40M1388.80,255.90A4.80,4.80 0 0 1 1398.40,255.90L1393.60,275.40ZM1393.60,275.40A4.80,4.80 0 0 0 1403.20,275.40M1398.40,255.90A4.80,4.80 0 0 1 1408.00,255.90L1403.20,275.40ZM1403.20,275.40A4.80,4.80 0 0 0 1412.80,275.40M1408.00,255.90A4.80,4.80 0 0 1 1417.60,255.90L1412.80,275.40ZM1412.80,275.40A4.80,4.80 0 0 0 1422.40,275.40M1417.60,255.90A4.80,4.80 0 0 1 1427.20,255.90L1422.40,275.40ZM1422.40,275.40A4.80,4.80 0 0 0 1432.00,275.40M1427.20,255.90A4.80,4.80 0 0 1 1436.80,255.90L1432.00,275.40ZM1432.00,275.40A4.80,4.80 0 0 0 1441.60,275.40M1436.80,255.90A4.80,4.80 0 0 1 1446.40,255.90L1441.60,275.40ZM1441.60,275.40A4.80,4.80 0 0 0 1451.20,275.40M1446.40,255.90A4.80,4.80 0 0 1 1456.00,255.90L1451.20,275.40ZM1451.20,275.40A4.80,4.80 0 0 0 1460.80,275.40M1456.00,255.90A4.80,4.80 0 0 1 1465.60,255.90L1460.80,275.40ZM1460.80,275.40A4.80,4.80 0 0 0 1470.40,275.40M1465.60,255.90A4.80,4.80 0 0 1 1475.20,255.90L1470.40,275.40ZM1470.40,275.40A4.80,4.80 0 0 0 1480.00,275.40M1475.20,255.90A4.80,4.80 0 0 1 1484.80,255.90L1480.00,275.40ZM1480.00,275.40A4.80,4.80 0 0 0 1489.60,275.40M1484.80,255.90A4.80,4.80 0 0 1 1494.40,255.90L1489.60,275.40ZM1489.60,275.40A4.80,4.80 0 0 0 1499.20,275.40M1494.40,255.90A4.80,4.80 0 0 1 1504.00,255.90L1499.20,275.40ZM1499.20,275.40A4.80,4.80 0 0 0 1508.80,275.40M1504.00,255.90A4.80,4.80 0 0 1 1513.60,255.90L1508.80,275.40ZM1508.80,275.40A4.80,4.80 0 0 0 1518.40,275.40M1513.60,255.90A4.80,4.80 0 0 1 1523.20,255.90L1518.40,275.40ZM1518.40,275.40A4.80,4.80 0 0 0 1528.00,275.40M1523.20,255.90A4.80,4.80 0 0 1 1532.80,255.90L1528.00,275.40ZM1528.00,275.40A4.80,4.80 0 0 0 1537.60,275.40M1532.80,255.90A4.80,4.80 0 0 1 1542.40,255.90L1537.60,275.40ZM1537.60,275.40A4.80,4.80 0 0 0 1547.20,275.40M1542.40,255.90A4.80,4.80 0 0 1 1552.00,255.90L1547.20,275.40ZM1547.20,275.40A4.80,4.80 0 0 0 1556.80,275.40M1552.00,255.90A4.80,4.80 0 0 1 1561.60,255.90L1556.80,275.40ZM1556.80,275.40A4.80,4.80 0 0 0 1566.40,275.40" fill="none" stroke="#5b5a3e" stroke-width="0.9"/></g>
<rect x="899.3" y="164.6" width="71.90000000000009" height="115.6" fill="#c89e77"/>
<g clip-path="url(#cs1)" fill="none" stroke="#65523f" stroke-width="0.85"><ellipse cx="901.5999999999999" cy="208.2" rx="2.6" ry="2.1"/><ellipse cx="901.3" cy="208.2" rx="9.5" ry="9.9"/><ellipse cx="901.3" cy="208.2" rx="18.2" ry="17.0"/><ellipse cx="901.3" cy="208.2" rx="26.0" ry="24.8"/><ellipse cx="901.3" cy="208.2" rx="34.3" ry="32.7"/><ellipse cx="901.3" cy="208.2" rx="42.6" ry="40.5"/><ellipse cx="901.3" cy="208.2" rx="49.8" ry="47.2"/><ellipse cx="901.3" cy="208.2" rx="56.9" ry="53.1"/><ellipse cx="901.3" cy="208.2" rx="65.2" ry="58.3"/><ellipse cx="901.3" cy="208.2" rx="73.0" ry="65.0"/><ellipse cx="901.3" cy="208.2" rx="80.3" ry="71.5"/><ellipse cx="901.3" cy="208.2" rx="88.0" ry="78.0"/></g>
<g clip-path="url(#cs1b)" fill="none" stroke="#5e4c3a" stroke-width="0.9"><ellipse cx="935.25" cy="277.8" rx="2.6" ry="2.1"/><ellipse cx="935.25" cy="277.8" rx="10.1" ry="8.4"/><ellipse cx="935.25" cy="277.8" rx="19.7" ry="16.4"/><ellipse cx="935.25" cy="277.8" rx="29.3" ry="24.4"/><ellipse cx="935.25" cy="277.8" rx="38.9" ry="32.4"/><ellipse cx="935.25" cy="277.8" rx="48.5" ry="40.4"/><ellipse cx="935.25" cy="277.8" rx="58.1" ry="48.4"/></g>
<rect x="899.8" y="164.6" width="70.90000000000009" height="115.6" fill="none" stroke="#8a6c52" stroke-width="1"/>
<line x1="899.3" y1="251.1" x2="971.2" y2="251.1" stroke="#8a6c52" stroke-width="1"/>
<rect x="1404.4" y="164.6" width="71.59999999999991" height="115.6" fill="#c89e77"/>
<g clip-path="url(#cs2)" fill="none" stroke="#65523f" stroke-width="0.85"><ellipse cx="1406.7" cy="208.2" rx="2.6" ry="2.1"/><ellipse cx="1406.4" cy="208.2" rx="9.5" ry="9.9"/><ellipse cx="1406.4" cy="208.2" rx="18.2" ry="17.0"/><ellipse cx="1406.4" cy="208.2" rx="26.0" ry="24.8"/><ellipse cx="1406.4" cy="208.2" rx="34.3" ry="32.7"/><ellipse cx="1406.4" cy="208.2" rx="42.6" ry="40.5"/><ellipse cx="1406.4" cy="208.2" rx="49.8" ry="47.2"/><ellipse cx="1406.4" cy="208.2" rx="56.9" ry="53.1"/><ellipse cx="1406.4" cy="208.2" rx="65.2" ry="58.3"/><ellipse cx="1406.4" cy="208.2" rx="73.0" ry="65.0"/><ellipse cx="1406.4" cy="208.2" rx="80.3" ry="71.5"/><ellipse cx="1406.4" cy="208.2" rx="88.0" ry="78.0"/></g>
<g clip-path="url(#cs2b)" fill="none" stroke="#5e4c3a" stroke-width="0.9"><ellipse cx="1440.2" cy="277.8" rx="2.6" ry="2.1"/><ellipse cx="1440.2" cy="277.8" rx="10.1" ry="8.4"/><ellipse cx="1440.2" cy="277.8" rx="19.7" ry="16.4"/><ellipse cx="1440.2" cy="277.8" rx="29.3" ry="24.4"/><ellipse cx="1440.2" cy="277.8" rx="38.9" ry="32.4"/><ellipse cx="1440.2" cy="277.8" rx="48.5" ry="40.4"/><ellipse cx="1440.2" cy="277.8" rx="58.1" ry="48.4"/></g>
<rect x="1404.9" y="164.6" width="70.59999999999991" height="115.6" fill="none" stroke="#8a6c52" stroke-width="1"/>
<line x1="1404.4" y1="251.1" x2="1476.0" y2="251.1" stroke="#8a6c52" stroke-width="1"/>
<rect x="827.2" y="157.6" width="720.8" height="7.0" fill="#c89e77"/>
<g clip-path="url(#ctop)" fill="none" stroke="#8c6e52" stroke-width="0.8"><path d="M836.0,163.8 L866.0,159.0 L848.0,160.8"/><path d="M890.0,163.8 L926.0,159.0 L902.0,160.8"/><path d="M1004.0,163.8 L1047.0,159.0 L1016.0,160.8"/><path d="M1116.0,163.8 L1160.0,159.0 L1128.0,160.8"/><path d="M1232.0,163.8 L1270.0,159.0 L1244.0,160.8"/><path d="M1300.0,163.8 L1356.0,159.0 L1312.0,160.8"/><path d="M1420.0,163.8 L1470.0,159.0 L1432.0,160.8"/><path d="M1500.0,163.8 L1540.0,159.0 L1512.0,160.8"/></g>
<line x1="827.2" y1="158.1" x2="1548.0" y2="158.1" stroke="#7d6650" stroke-width="1"/>
<line x1="827.2" y1="164.2" x2="1548.0" y2="164.2" stroke="#6e5a48" stroke-width="1"/>
<rect x="827.2" y="280.2" width="720.8" height="7.400000000000034" fill="#d5d5d5"/>
<line x1="827.2" y1="280.5" x2="1548.0" y2="280.5" stroke="#a8a8a0" stroke-width="0.7"/>
<g fill="none" stroke="#9c9c9c" stroke-width="0.7"><circle cx="999.8" cy="284.1" r="0.9"/><circle cx="1094.4" cy="284.4" r="0.9"/><circle cx="1277.7" cy="282.0" r="0.9"/><circle cx="838.6" cy="285.4" r="0.9"/><circle cx="1015.1" cy="282.7" r="0.9"/><circle cx="1542.9" cy="283.8" r="0.9"/><circle cx="1428.8" cy="283.8" r="0.9"/><circle cx="1287.3" cy="282.4" r="0.9"/><circle cx="1284.3" cy="285.5" r="0.9"/><circle cx="1204.2" cy="285.0" r="0.9"/><circle cx="1310.5" cy="282.0" r="0.9"/><circle cx="1372.7" cy="284.3" r="0.9"/><circle cx="1045.1" cy="281.8" r="0.9"/><circle cx="1449.6" cy="283.8" r="0.9"/><circle cx="1344.5" cy="285.6" r="0.9"/><circle cx="1341.1" cy="285.8" r="0.9"/><circle cx="1112.3" cy="285.2" r="0.9"/><circle cx="1147.9" cy="285.8" r="0.9"/><circle cx="1459.2" cy="282.1" r="0.9"/><circle cx="926.7" cy="282.7" r="0.9"/><circle cx="1521.3" cy="283.6" r="0.9"/><circle cx="1278.4" cy="283.0" r="0.9"/><circle cx="1192.8" cy="283.4" r="0.9"/><circle cx="1080.7" cy="284.3" r="0.9"/><circle cx="1248.0" cy="285.7" r="0.9"/><circle cx="1318.0" cy="285.8" r="0.9"/><circle cx="1443.1" cy="286.1" r="0.9"/><circle cx="1310.4" cy="282.4" r="0.9"/><circle cx="1446.1" cy="285.9" r="0.9"/><circle cx="1477.7" cy="284.2" r="0.9"/><circle cx="1340.9" cy="282.6" r="0.9"/><circle cx="1425.3" cy="284.2" r="0.9"/><circle cx="1033.5" cy="282.0" r="0.9"/><circle cx="1441.3" cy="286.1" r="0.9"/><circle cx="892.6" cy="285.2" r="0.9"/><circle cx="1123.4" cy="282.4" r="0.9"/><circle cx="1039.9" cy="285.1" r="0.9"/><circle cx="1454.8" cy="281.9" r="0.9"/><circle cx="1269.7" cy="281.9" r="0.9"/><circle cx="1344.2" cy="283.2" r="0.9"/><circle cx="1460.6" cy="286.0" r="0.9"/><circle cx="1191.5" cy="286.1" r="0.9"/><circle cx="1051.2" cy="282.0" r="0.9"/><circle cx="1259.1" cy="281.8" r="0.9"/><circle cx="970.7" cy="283.5" r="0.9"/><circle cx="1266.8" cy="282.4" r="0.9"/><circle cx="859.6" cy="285.5" r="0.9"/><circle cx="1054.2" cy="285.9" r="0.9"/><circle cx="1471.9" cy="283.4" r="0.9"/><circle cx="1159.2" cy="284.0" r="0.9"/><circle cx="1290.7" cy="284.3" r="0.9"/><circle cx="1230.1" cy="284.4" r="0.9"/><circle cx="1503.4" cy="283.9" r="0.9"/><circle cx="1138.3" cy="284.9" r="0.9"/><circle cx="999.5" cy="283.0" r="0.9"/></g>
<rect x="827.2" y="287.6" width="720.8" height="2.2" fill="#fdfdfd" stroke="#b0b0b0" stroke-width="0.4"/>
<rect x="827.2" y="287.8" width="32.8" height="2.2" fill="#111"/>
<rect x="892.8" y="287.8" width="32.8" height="2.2" fill="#111"/>
<rect x="958.4" y="287.8" width="32.8" height="2.2" fill="#111"/>
<rect x="1024.0" y="287.8" width="32.8" height="2.2" fill="#111"/>
<rect x="1089.6" y="287.8" width="32.8" height="2.2" fill="#111"/>
<rect x="1155.2" y="287.8" width="32.8" height="2.2" fill="#111"/>
<rect x="1220.8" y="287.8" width="32.8" height="2.2" fill="#111"/>
<rect x="1286.4" y="287.8" width="32.8" height="2.2" fill="#111"/>
<rect x="1352.0" y="287.8" width="32.8" height="2.2" fill="#111"/>
<rect x="1417.6" y="287.8" width="32.8" height="2.2" fill="#111"/>
<rect x="1483.2" y="287.8" width="32.8" height="2.2" fill="#111"/>
<g stroke="#777" stroke-width="1" fill="none">
<line x1="787.5" y1="157.6" x2="787.5" y2="289.0"/>
<line x1="782" y1="157.6" x2="792" y2="157.6"/>
<line x1="782" y1="165.0" x2="792" y2="165.0"/>
<line x1="782" y1="251.1" x2="792" y2="251.1"/>
<line x1="782" y1="280.2" x2="792" y2="280.2"/>
</g>
<rect x="782" y="287.8" width="10" height="2.2" fill="#333"/>
<g font-family="Liberation Sans, sans-serif" font-size="14" fill="#777">
<text x="792.5" y="213">120</text>
<text x="792.5" y="271">40</text>
<text transform="translate(779.5,241) rotate(-90)" font-size="14">182,5</text>
<text x="935.3" y="334" text-anchor="middle">100</text>
<text x="1187.5" y="334" text-anchor="middle">600</text>
<text x="1166.5" y="151">Außen</text>
<text x="1169" y="306">Innen</text>
</g>
<g stroke="#777" stroke-width="1" fill="none">
<line x1="899.3" y1="319.5" x2="1404.4" y2="319.5"/>
<line x1="899.3" y1="314" x2="899.3" y2="324"/>
<line x1="971.2" y1="314" x2="971.2" y2="324"/>
<line x1="1404.4" y1="314" x2="1404.4" y2="324"/>
</g>
<g stroke="#333" fill="none"><circle cx="786.9" cy="316.1" r="7.6" stroke-width="2"/><line x1="783" y1="316.1" x2="790.8" y2="316.1" stroke-width="1.8"/><line x1="786.9" y1="312.2" x2="786.9" y2="320" stroke-width="1.8"/><line x1="792.5" y1="321.7" x2="800.7" y2="329.9" stroke-width="3.2"/></g>
<g font-family="Liberation Sans, sans-serif" font-size="14" text-anchor="middle" fill="#111">
<circle cx="1247.1" cy="160.7" r="9.5" fill="#fff" stroke="#333" stroke-width="1"/><text x="1247.1" y="165.7">7</text>
<circle cx="1247.1" cy="207.8" r="9.5" fill="#fff" stroke="#333" stroke-width="1"/><text x="1247.1" y="212.8">6</text>
<circle cx="1247.1" cy="266.0" r="9.5" fill="#fff" stroke="#333" stroke-width="1"/><text x="1247.1" y="271.0">5</text>
<circle cx="1167.5" cy="289.3" r="9.5" fill="#fff" stroke="#333" stroke-width="1"/><text x="1167.5" y="294.3">1</text>
<circle cx="1187.8" cy="289.3" r="9.5" fill="#fff" stroke="#333" stroke-width="1"/><text x="1187.8" y="294.3">2</text>
<circle cx="1207.8" cy="289.3" r="9.5" fill="#fff" stroke="#333" stroke-width="1"/><text x="1207.8" y="294.3">3</text>
<circle cx="1227.2" cy="285.3" r="9.5" fill="#fff" stroke="#333" stroke-width="1"/><text x="1227.2" y="290.3">4</text>
</g>
<g stroke="#555" stroke-width="1" fill="none">
<polyline points="1542.2,161.2 1567.8,161.2 1593.7,117.2"/>
<polyline points="1470,171 1475.5,167.7 1568,167.7 1593.7,141.3"/>
<polyline points="1542.2,171 1568,171 1593,165.2"/>
<polyline points="1470,257.1 1476,253.6 1567.5,253.6 1593.4,189.3"/>
<polyline points="1542.3,257.1 1567.5,257.1 1593.4,213"/>
<polyline points="1542.3,284.2 1568.2,284.2 1593.4,237.9"/>
<polyline points="1541.4,289.7 1547.5,286.2 1568.2,286.2 1593.2,309"/>
</g>
<g fill="#333">
<circle cx="1542.2" cy="161.2" r="1.3"/>
<circle cx="1470" cy="171" r="1.3"/>
<circle cx="1542.2" cy="171" r="1.3"/>
<circle cx="1470" cy="257.1" r="1.3"/>
<circle cx="1542.3" cy="257.1" r="1.3"/>
<circle cx="1542.3" cy="284.2" r="1.3"/>
</g>
<g stroke="#999" stroke-width="1.2" fill="none"><polyline points="1593,261.7 1588.3,261.7 1588.3,333.2 1593,333.2"/><line x1="1588.3" y1="285.4" x2="1593" y2="285.4"/></g>
<rect x="1583" y="288" width="5.3" height="1.8" fill="#333"/>
<g font-family="Liberation Sans, sans-serif" font-size="14">
<text x="1598" y="121.9" fill="#333">Fichte (10mm)</text>
<text x="1598" y="145.9" fill="#333">Fichte (120x100mm²)</text>
<text x="1598" y="169.9" fill="#333">Glaswolle WLG040 (120mm)</text>
<text x="1598" y="193.9" fill="#333">Fichte (40x100mm²)</text>
<text x="1598" y="217.9" fill="#333">Styropor (WLG040) (40mm)</text>
<text x="1598" y="241.9" fill="#333">Gipsfaserplatte (12mm)</text>
<text x="1598" y="265.9" fill="#aaa">Fichte (50x100mm²)</text>
<text x="1598" y="289.9" fill="#aaa">Steinwolle Fassadendämmplatte (50mm)</text>
<text x="1598" y="313.9" fill="#333">Dampfsperre (0,5mm)</text>
<text x="1598" y="337.9" fill="#aaa">Gipsfaserplatte (12mm)</text>
<text x="1548" y="306" text-anchor="end" fill="#bbb">ubakus.de</text>
</g>
</svg>
<div class="a" style="left:710px;top:627px;font-size:13px;line-height:15px;white-space:nowrap;color:#8b1212;">Gewerbliche Nutzung nur mit kostenpflichtigem Zugang. <span style="color:#2230c0">Weitere Infos</span></div>
<div class="a" style="left:0;top:649px;width:1826px;height:149px;background:linear-gradient(#4c4c4c,#3c3c3c);border-top:1px solid #151515"></div>
<div class="a" style="left:372px;top:662px;font-size:21px;line-height:24px;white-space:nowrap;color:#eee;">U-Wert:</div>
<div class="a" style="left:450px;top:658px;font-size:25.5px;line-height:29px;white-space:nowrap;color:#eee;">0,298</div>
<div class="a" style="left:519px;top:670px;font-size:12px;line-height:15px;white-space:nowrap;color:#eee;">W/(m²K)</div>
<svg class="ic" style="left:584px;top:665px" width="18" height="18" viewBox="0 0 18 18"><circle cx="5.6" cy="5.6" r="4.4" fill="#b2b2b2"/><line x1="5.6" y1="5.6" x2="15.4" y2="15.4" stroke="#b2b2b2" stroke-width="3.2" stroke-linecap="round"/><path d="M2.4,0.4 L5.6,3.6 L3.6,5.6 L0.4,2.4 Z" fill="#4a4a4a"/><circle cx="15" cy="15" r="0.8" fill="#888"/></svg>
<div class="a" style="left:372px;top:693px;width:232px;height:16px"><div class="a" style="left:0;top:0;width:232px;height:1px;background:#3a3d3d"></div><div class="a" style="left:0;top:0;width:1px;height:16px;background:#3a3d3d"></div><div class="a" style="left:231px;top:1px;width:1px;height:15px;background:#767878"></div><div class="a" style="left:1px;top:11px;width:231px;height:1px;background:#767878"></div><div class="a" style="left:1px;top:1px;width:69px;height:10px;background:#b5000f;box-shadow:inset 0 1px 0 rgba(255,255,255,.3)"></div><div class="a" style="left:1px;top:12px;width:230px;height:1px;background:#3a3d40"></div><div class="a" style="left:1px;top:13px;width:230px;height:2px;background:linear-gradient(90deg,#6a9a3c 0%,#6a9a3c 24.5%,#a41c1e 24.6%,#a41c1e 100%)"></div><div class="a" style="left:1px;top:15px;width:231px;height:1px;background:#6c7070"></div></div>
<div class="a" style="left:372px;top:715px;font-size:13px;line-height:15px;white-space:nowrap;color:#eee;">GEG 2020/24 Bestand U ≤ 0.24</div>
<div class="a" style="left:562px;top:714px;width:15px;height:15px;background:#c4c4c4"></div>
<div class="a" style="left:565px;top:718px;border-left:4.5px solid transparent;border-right:4.5px solid transparent;border-top:8px solid #444"></div>
<div class="a" style="left:372px;top:742px;font-size:13px;line-height:15px;white-space:nowrap;color:#eee;">Beitrag zum Treibhauseffekt:</div>
<div class="a" style="left:372px;top:758px;width:232px;height:12px"><div class="a" style="left:0;top:0;width:232px;height:1px;background:#3a3d3d"></div><div class="a" style="left:0;top:0;width:1px;height:12px;background:#3a3d3d"></div><div class="a" style="left:231px;top:1px;width:1px;height:11px;background:#767878"></div><div class="a" style="left:1px;top:7px;width:231px;height:1px;background:#767878"></div><div class="a" style="left:1px;top:1px;width:143px;height:6px;background:#a8c43a;box-shadow:inset 0 1px 0 rgba(255,255,255,.3)"></div><div class="a" style="left:1px;top:8px;width:230px;height:1px;background:#3a3d40"></div><div class="a" style="left:1px;top:9px;width:230px;height:2px;background:linear-gradient(90deg,#6a9a3c 0%,#6a9a3c 35%,#b49a2c 65%,#a41c1e 100%)"></div><div class="a" style="left:1px;top:11px;width:231px;height:1px;background:#6c7070"></div></div>
<div class="a" style="left:372px;top:777px;font-size:13px;line-height:15px;white-space:nowrap;color:#b4b4b4;">sehr gut</div>
<div class="a" style="right:1222px;top:777px;font-size:13px;line-height:15px;white-space:nowrap;color:#b4b4b4;">mangelhaft</div>
<div class="a" style="left:624px;top:662px;font-size:13px;line-height:15px;white-space:nowrap;color:#eee;">Tauwasser: 0 kg/m²</div>
<div class="a" style="left:624px;top:678px;width:232px;height:12px"><div class="a" style="left:0;top:0;width:232px;height:1px;background:#3a3d3d"></div><div class="a" style="left:0;top:0;width:1px;height:12px;background:#3a3d3d"></div><div class="a" style="left:231px;top:1px;width:1px;height:11px;background:#767878"></div><div class="a" style="left:1px;top:7px;width:231px;height:1px;background:#767878"></div><div class="a" style="left:1px;top:1px;width:2px;height:6px;background:#9ad04a;box-shadow:inset 0 1px 0 rgba(255,255,255,.3)"></div><div class="a" style="left:1px;top:8px;width:230px;height:1px;background:#3a3d40"></div><div class="a" style="left:1px;top:9px;width:230px;height:2px;background:linear-gradient(90deg,#6a9a3c 0%,#6a9a3c 35%,#b49a2c 65%,#a41c1e 100%)"></div><div class="a" style="left:1px;top:11px;width:231px;height:1px;background:#6c7070"></div></div>
<div class="a" style="left:624px;top:702px;font-size:13px;line-height:15px;white-space:nowrap;color:#eee;">Holzfeuchte: +0,0 %</div>
<div class="a" style="left:624px;top:718px;width:232px;height:12px"><div class="a" style="left:0;top:0;width:232px;height:1px;background:#3a3d3d"></div><div class="a" style="left:0;top:0;width:1px;height:12px;background:#3a3d3d"></div><div class="a" style="left:231px;top:1px;width:1px;height:11px;background:#767878"></div><div class="a" style="left:1px;top:7px;width:231px;height:1px;background:#767878"></div><div class="a" style="left:1px;top:1px;width:2px;height:6px;background:#9ad04a;box-shadow:inset 0 1px 0 rgba(255,255,255,.3)"></div><div class="a" style="left:1px;top:8px;width:230px;height:1px;background:#3a3d40"></div><div class="a" style="left:1px;top:9px;width:230px;height:2px;background:linear-gradient(90deg,#6a9a3c 0%,#6a9a3c 20%,#b49a2c 32%,#a41c1e 50%,#a41c1e 100%)"></div><div class="a" style="left:1px;top:11px;width:231px;height:1px;background:#6c7070"></div></div>
<div class="a" style="left:624px;top:742px;font-size:13px;line-height:15px;white-space:nowrap;color:#eee;">Trocknungsdauer: -</div>
<div class="a" style="left:624px;top:758px;width:232px;height:12px"><div class="a" style="left:0;top:0;width:232px;height:1px;background:#3a3d3d"></div><div class="a" style="left:0;top:0;width:1px;height:12px;background:#3a3d3d"></div><div class="a" style="left:231px;top:1px;width:1px;height:11px;background:#767878"></div><div class="a" style="left:1px;top:7px;width:231px;height:1px;background:#767878"></div><div class="a" style="left:1px;top:1px;width:2px;height:6px;background:#9ad04a;box-shadow:inset 0 1px 0 rgba(255,255,255,.3)"></div><div class="a" style="left:1px;top:8px;width:230px;height:1px;background:#3a3d40"></div><div class="a" style="left:1px;top:9px;width:230px;height:2px;background:linear-gradient(90deg,#6a9a3c 0%,#6a9a3c 35%,#b49a2c 65%,#a41c1e 100%)"></div><div class="a" style="left:1px;top:11px;width:231px;height:1px;background:#6c7070"></div></div>
<div class="a" style="left:624px;top:777px;font-size:13px;line-height:15px;white-space:nowrap;color:#b4b4b4;">sehr gut</div>
<div class="a" style="right:970px;top:777px;font-size:13px;line-height:15px;white-space:nowrap;color:#b4b4b4;">mangelhaft</div>
<div class="a" style="left:876px;top:662px;font-size:13px;line-height:15px;white-space:nowrap;color:#eee;">sd-Wert: 502 m</div>
<div class="a" style="right:718px;top:662px;font-size:13px;line-height:15px;white-space:nowrap;color:#eee;">Dicke: 18,25 cm</div>
<div class="a" style="right:718px;top:680px;font-size:13px;line-height:15px;white-space:nowrap;color:#eee;">Gewicht: 32 kg/m²</div>
<div class="a" style="left:876px;top:700px;font-size:13px;line-height:15px;white-space:nowrap;color:#eee;">Oberfläche innen: 17,8°C (57%)</div>
<div class="a" style="left:876px;top:716px;width:232px;height:12px"><div class="a" style="left:0;top:0;width:232px;height:1px;background:#3a3d3d"></div><div class="a" style="left:0;top:0;width:1px;height:12px;background:#3a3d3d"></div><div class="a" style="left:231px;top:1px;width:1px;height:11px;background:#767878"></div><div class="a" style="left:1px;top:7px;width:231px;height:1px;background:#767878"></div><div class="a" style="left:1px;top:1px;width:99px;height:6px;background:#8cc454;box-shadow:inset 0 1px 0 rgba(255,255,255,.3)"></div><div class="a" style="left:1px;top:8px;width:230px;height:1px;background:#3a3d40"></div><div class="a" style="left:1px;top:9px;width:230px;height:2px;background:linear-gradient(90deg,#a41c1e 0%,#a41c1e 15%,#b49a2c 25%,#6a9a3c 40%,#6a9a3c 100%)"></div><div class="a" style="left:1px;top:11px;width:231px;height:1px;background:#6c7070"></div></div>
<div class="a" style="left:876px;top:740px;font-size:13px;line-height:15px;white-space:nowrap;color:#eee;">Trocknungsreserve: 1878 g/m²a</div>
<div class="a" style="left:876px;top:756px;width:232px;height:12px"><div class="a" style="left:0;top:0;width:232px;height:1px;background:#3a3d3d"></div><div class="a" style="left:0;top:0;width:1px;height:12px;background:#3a3d3d"></div><div class="a" style="left:231px;top:1px;width:1px;height:11px;background:#767878"></div><div class="a" style="left:1px;top:7px;width:231px;height:1px;background:#767878"></div><div class="a" style="left:1px;top:1px;width:230px;height:6px;background:#8cc454;box-shadow:inset 0 1px 0 rgba(255,255,255,.3)"></div><div class="a" style="left:1px;top:8px;width:230px;height:1px;background:#3a3d40"></div><div class="a" style="left:1px;top:9px;width:230px;height:2px;background:linear-gradient(90deg,#a41c1e 0%,#a41c1e 42%,#b49a2c 52%,#6a9a3c 62%,#6a9a3c 100%)"></div><div class="a" style="left:1px;top:11px;width:231px;height:1px;background:#6c7070"></div></div>
<div class="a" style="left:876px;top:775px;font-size:13px;line-height:15px;white-space:nowrap;color:#b4b4b4;">mangelhaft</div>
<div class="a" style="right:718px;top:775px;font-size:13px;line-height:15px;white-space:nowrap;color:#b4b4b4;">sehr gut</div>
<div class="a" style="left:1128px;top:662px;font-size:13px;line-height:15px;white-space:nowrap;color:#eee;">Temp.Ampl.Dämpfung (1/TAV): 5,3</div>
<div class="a" style="left:1128px;top:678px;width:232px;height:12px"><div class="a" style="left:0;top:0;width:232px;height:1px;background:#3a3d3d"></div><div class="a" style="left:0;top:0;width:1px;height:12px;background:#3a3d3d"></div><div class="a" style="left:231px;top:1px;width:1px;height:11px;background:#767878"></div><div class="a" style="left:1px;top:7px;width:231px;height:1px;background:#767878"></div><div class="a" style="left:1px;top:1px;width:61px;height:6px;background:#bcc22e;box-shadow:inset 0 1px 0 rgba(255,255,255,.3)"></div><div class="a" style="left:1px;top:8px;width:230px;height:1px;background:#3a3d40"></div><div class="a" style="left:1px;top:9px;width:230px;height:2px;background:linear-gradient(90deg,#a41c1e 0%,#b49a2c 12%,#6a9a3c 30%,#6a9a3c 100%)"></div><div class="a" style="left:1px;top:11px;width:231px;height:1px;background:#6c7070"></div></div>
<div class="a" style="left:1128px;top:702px;font-size:13px;line-height:15px;white-space:nowrap;color:#eee;">Phasenverschiebung: 5,8 h</div>
<div class="a" style="left:1128px;top:718px;width:232px;height:12px"><div class="a" style="left:0;top:0;width:232px;height:1px;background:#3a3d3d"></div><div class="a" style="left:0;top:0;width:1px;height:12px;background:#3a3d3d"></div><div class="a" style="left:231px;top:1px;width:1px;height:11px;background:#767878"></div><div class="a" style="left:1px;top:7px;width:231px;height:1px;background:#767878"></div><div class="a" style="left:1px;top:1px;width:75px;height:6px;background:#bcc22e;box-shadow:inset 0 1px 0 rgba(255,255,255,.3)"></div><div class="a" style="left:1px;top:8px;width:230px;height:1px;background:#3a3d40"></div><div class="a" style="left:1px;top:9px;width:230px;height:2px;background:linear-gradient(90deg,#a41c1e 0%,#b49a2c 12%,#6a9a3c 30%,#6a9a3c 100%)"></div><div class="a" style="left:1px;top:11px;width:231px;height:1px;background:#6c7070"></div></div>
<div class="a" style="left:1128px;top:742px;font-size:13px;line-height:15px;white-space:nowrap;color:#eee;">Speicherfähigkeit innen: 25 kJ/m²K</div>
<div class="a" style="left:1128px;top:758px;width:232px;height:12px"><div class="a" style="left:0;top:0;width:232px;height:1px;background:#3a3d3d"></div><div class="a" style="left:0;top:0;width:1px;height:12px;background:#3a3d3d"></div><div class="a" style="left:231px;top:1px;width:1px;height:11px;background:#767878"></div><div class="a" style="left:1px;top:7px;width:231px;height:1px;background:#767878"></div><div class="a" style="left:1px;top:1px;width:58px;height:6px;background:#d0c02c;box-shadow:inset 0 1px 0 rgba(255,255,255,.3)"></div><div class="a" style="left:1px;top:8px;width:230px;height:1px;background:#3a3d40"></div><div class="a" style="left:1px;top:9px;width:230px;height:2px;background:linear-gradient(90deg,#a41c1e 0%,#b49a2c 12%,#6a9a3c 30%,#6a9a3c 100%)"></div><div class="a" style="left:1px;top:11px;width:231px;height:1px;background:#6c7070"></div></div>
<div class="a" style="left:1128px;top:777px;font-size:13px;line-height:15px;white-space:nowrap;color:#b4b4b4;">mangelhaft</div>
<div class="a" style="right:466px;top:777px;font-size:13px;line-height:15px;white-space:nowrap;color:#b4b4b4;">sehr gut</div>
</body></html>
